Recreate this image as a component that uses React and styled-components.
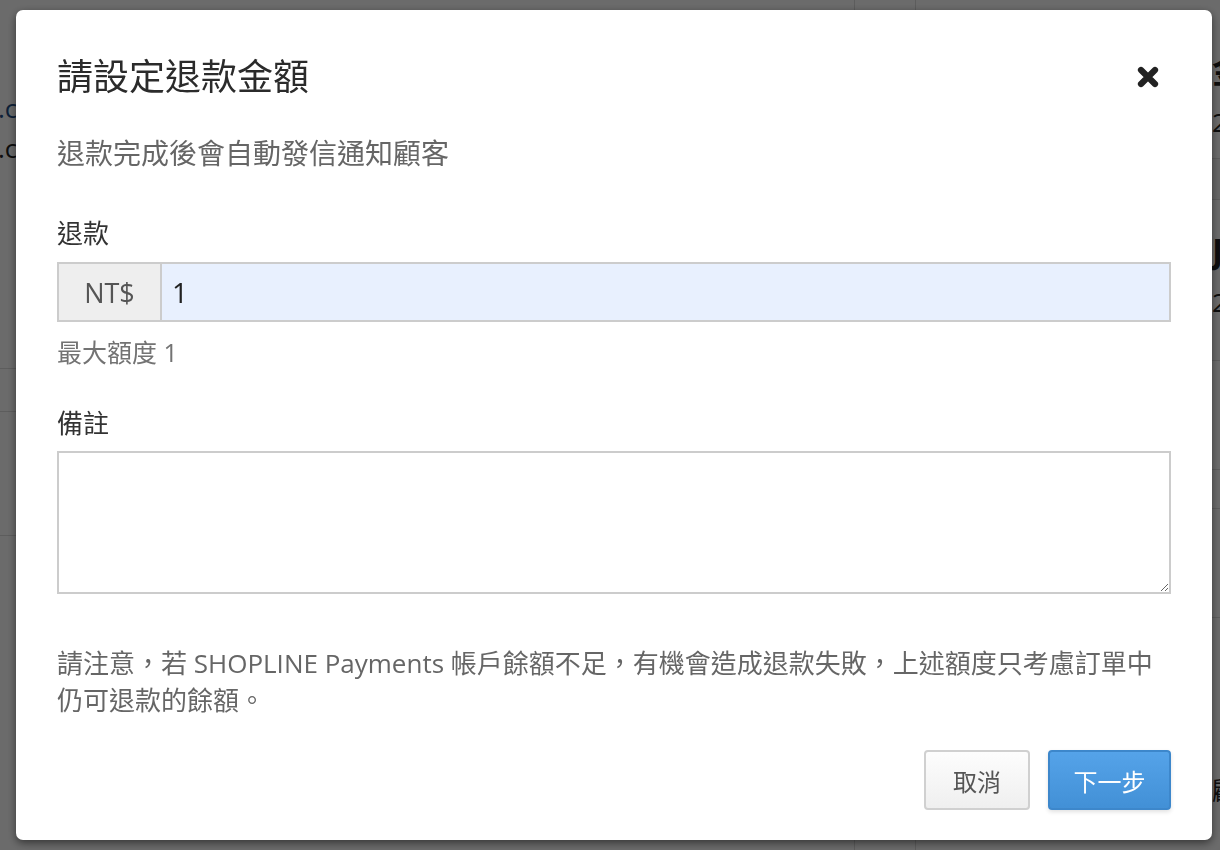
import React from 'react';
import styled, { createGlobalStyle } from 'styled-components';

const GlobalStyle = createGlobalStyle`
  html, body {
    margin: 0;
    padding: 0;
    height: 100%;
  }
  body {
    font-family: "Open Sans", "Noto Sans CJK TC", sans-serif;
    background: #fff;
    overflow: hidden;
  }
`;

const FONT = `"Open Sans", "Noto Sans CJK TC", sans-serif`;

function CloseIcon() {
  return (
    <svg width="24" height="24" viewBox="0 0 24 24">
      <path
        d="M5 5 L19 19 M19 5 L5 19"
        stroke="#222"
        strokeWidth="6.2"
        strokeLinecap="round"
        fill="none"
      />
    </svg>
  );
}

function App() {
  return (
    <>
      <GlobalStyle />
      <Page>
        <LeftPane>
          <Link>shop.co</Link>
          <PlainLine>shop.co</PlainLine>
          <Spacer $h={200} />
          <Rule />
          <Spacer $h={42} />
          <Rule />
          <Spacer $h={123} />
          <Rule />
        </LeftPane>
        <MidPane />
        <RightPane>
          <Heading>金額</Heading>
          <Num>2</Num>
          <Band />
          <Heading>J</Heading>
          <Num>2</Num>
          <Spacer $h={40} />
          <Rule />
          <Spacer $h={108} />
          <Rule />
          <Spacer $h={38} />
          <Rule />
          <Spacer $h={108} />
          <Rule />
          <Spacer $h={140} />
          <Num>顧</Num>
        </RightPane>
      </Page>

      <Overlay>
        <Modal>
          <Header>
            <Title>請設定退款金額</Title>
            <CloseButton type="button" aria-label="close">
              <CloseIcon />
            </CloseButton>
          </Header>

          <Subtitle>退款完成後會自動發信通知顧客</Subtitle>

          <Label>退款</Label>
          <InputGroup>
            <Addon>NT$</Addon>
            <AmountInput defaultValue="1" />
          </InputGroup>
          <HelpText>最大額度 1</HelpText>

          <Label $top={36}>備註</Label>
          <Remark />

          <Note>
            請注意，若 SHOPLINE Payments 帳戶餘額不足，有機會造成退款失敗，上述額度只考慮訂單中仍可退款的餘額。
          </Note>

          <Footer>
            <Button $w={106}>取消</Button>
            <Button $w={123} $primary>下一步</Button>
          </Footer>
        </Modal>
      </Overlay>
    </>
  );
}

const Page = styled.div`
  display: flex;
  height: 100vh;
  font-family: ${FONT};
  color: #222;
`;

const LeftPane = styled.div`
  width: 854px;
  padding-top: 88px;
  display: flex;
  flex-direction: column;
  align-items: flex-start;
  overflow: hidden;
  border-right: 1px solid #ddd;
`;

const MidPane = styled.div`
  width: 60px;
  border-right: 1px solid #ddd;
`;

const RightPane = styled.div`
  flex: 1;
  padding: 50px 0 0 296px;
  display: flex;
  flex-direction: column;
  overflow: hidden;
`;

const Link = styled.div`
  margin-left: -62px;
  font-size: 26px;
  line-height: 40px;
  color: #1f4e86;
`;

const PlainLine = styled(Link)`
  color: #222;
`;

const Spacer = styled.div`
  height: ${({ $h }) => $h}px;
  flex-shrink: 0;
`;

const Rule = styled.div`
  align-self: stretch;
  border-top: 1px solid #ddd;
`;

const Heading = styled.div`
  font-size: 34px;
  line-height: 40px;
  font-weight: 700;
  white-space: nowrap;
`;

const Num = styled.div`
  margin-top: 14px;
  font-size: 26px;
  line-height: 36px;
`;

const Band = styled.div`
  margin: 18px -300px 30px -300px;
  height: 40px;
  background: #f5f5f5;
  border-top: 1px solid #ddd;
  border-bottom: 1px solid #ddd;
`;

const Overlay = styled.div`
  position: fixed;
  inset: 0;
  background: rgba(0, 0, 0, 0.58);
  display: flex;
  padding: 10px 8px 10px 16px;
`;

const Modal = styled.div`
  flex: 1;
  display: flex;
  flex-direction: column;
  background: #fff;
  border-radius: 7px;
  box-shadow: 0 3px 9px rgba(0, 0, 0, 0.5);
  padding: 47px 41px 30px;
  font-family: ${FONT};
`;

const Header = styled.div`
  display: flex;
  align-items: center;
  justify-content: space-between;
`;

const Title = styled.h4`
  margin: 0;
  font-size: 36px;
  line-height: 40px;
  font-weight: 400;
  color: #2b2b2b;
`;

const CloseButton = styled.button`
  display: flex;
  padding: 0;
  margin: 0 11px 0 0;
  border: 0;
  background: none;
  cursor: pointer;
`;

const Subtitle = styled.p`
  margin: 36px 0 0;
  font-size: 28px;
  line-height: 40px;
  color: #666;
`;

const Label = styled.div`
  margin-top: ${({ $top }) => $top || 42}px;
  font-size: 26px;
  line-height: 36px;
  color: #333;
`;

const InputGroup = styled.div`
  margin-top: 11px;
  display: flex;
  height: 60px;
  border: 2px solid #ccc;
  box-sizing: border-box;
`;

const Addon = styled.span`
  width: 101px;
  display: flex;
  align-items: center;
  justify-content: center;
  background: #eee;
  border-right: 2px solid #ccc;
  font-size: 27px;
  color: #555;
`;

const AmountInput = styled.input`
  flex: 1;
  border: 0;
  outline: none;
  background: #e8f0fe;
  padding: 0 10px;
  font-family: ${FONT};
  font-size: 28px;
  color: #222;
`;

const HelpText = styled.div`
  margin-top: 13px;
  font-size: 25px;
  line-height: 34px;
  color: #737373;
`;

const Remark = styled.textarea`
  margin-top: 10px;
  height: 143px;
  box-sizing: border-box;
  border: 2px solid #ccc;
  padding: 10px;
  font-family: ${FONT};
  font-size: 26px;
  resize: vertical;
  outline: none;
`;

const Note = styled.p`
  margin: 51px 0 0;
  font-size: 26px;
  line-height: 37px;
  color: #666;
  padding-right: 10px;
`;

const Footer = styled.div`
  margin-top: 31px;
  display: flex;
  justify-content: flex-end;
  gap: 18px;
`;

const Button = styled.button`
  width: ${({ $w }) => $w}px;
  height: 60px;
  padding: 0;
  border-radius: 4px;
  font-family: ${FONT};
  font-size: 24px;
  cursor: pointer;
  border: 2px solid ${({ $primary }) => ($primary ? '#3d87cb' : '#d0d0d0')};
  color: ${({ $primary }) => ($primary ? '#fff' : '#555')};
  background: ${({ $primary }) =>
    $primary
      ? 'linear-gradient(#55a3e9, #4290d6)'
      : 'linear-gradient(#fdfdfd, #efefef)'};
  box-shadow: ${({ $primary }) =>
    $primary ? '0 2px 4px rgba(0, 0, 0, 0.12)' : 'none'};
`;

export default App;
